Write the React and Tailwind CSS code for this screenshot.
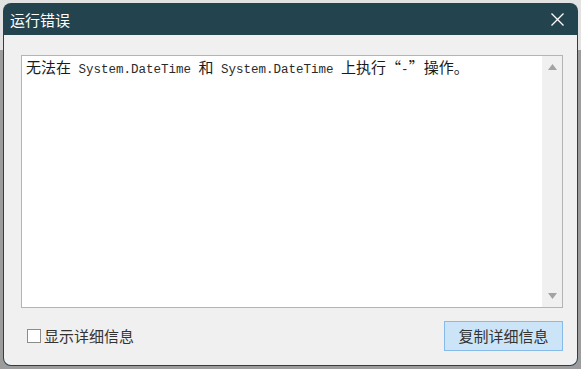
import React from "react";

const cjk = { fontFamily: '"Noto Sans CJK SC", "Microsoft YaHei", sans-serif' };

function Latin({ children }) {
  return (
    <span className="text-[12.5px] text-[#2a2a2a]" style={{ fontFamily: '"Liberation Mono", monospace' }}>
      {children}
    </span>
  );
}

export default function App() {
  return (
    <div className="w-[581px] h-[369px] p-[3px] bg-[linear-gradient(to_bottom,#e2e2e2_0px,#e2e2e2_50px,#9c9c9c_50px)] overflow-hidden">
      <div className="w-full h-full flex flex-col rounded-[8px] overflow-hidden bg-[#23444f]">
        {/* title bar */}
        <div className="h-[32px] flex items-center justify-between pl-[7px] pr-[14px] shrink-0">
          <span className="text-white text-[15px] leading-none" style={cjk}>运行错误</span>
          <svg width="13" height="13" viewBox="0 0 13 13" className="mt-[1px]">
            <path d="M0.5 0.5 L12.5 12.5 M12.5 0.5 L0.5 12.5" stroke="#ffffff" strokeWidth="1.3" fill="none" />
          </svg>
        </div>
        {/* body */}
        <div className="flex-1 flex flex-col bg-[#f0f0f0] ml-[1px] mr-[1px] mb-[1px] rounded-b-[7px] pl-[17px] pr-[14px] pt-[20px] pb-[14px]">
          <div className="h-[253px] border border-[#b4b4b4] bg-white flex">
            <div className="flex-1 pl-[4px] pt-[1px] text-[#1a1a1a] leading-[18px] whitespace-nowrap" style={cjk}>
              <span className="text-[15px]">无法在</span>
              <Latin> System.DateTime </Latin>
              <span className="text-[15px]">和</span>
              <Latin> System.DateTime </Latin>
              <span className="text-[15px]">上执行</span>
              <span className="inline-block w-[15px] text-right text-[15px]">“</span>
              <Latin>-</Latin>
              <span className="inline-block w-[15px] text-left text-[15px]">”</span>
              <span className="text-[15px]">操作。</span>
            </div>
            <div className="w-[20px] bg-[#f0f0f0] flex flex-col items-center justify-between py-[8px]">
              <svg width="9" height="6" viewBox="0 0 9 6"><path d="M4.5 0 L9 6 L0 6 Z" fill="#a3a3a3" /></svg>
              <svg width="9" height="6" viewBox="0 0 9 6"><path d="M0 0 L9 0 L4.5 6 Z" fill="#a3a3a3" /></svg>
            </div>
          </div>
          <div className="mt-[13px] flex items-center justify-between">
            <label className="flex items-center pl-[6px]">
              <span className="w-[14px] h-[14px] border border-[#8c8c8c] bg-white inline-block" />
              <span className="ml-[3px] text-[15px] text-[#333]" style={cjk}>显示详细信息</span>
            </label>
            <button className="w-[119px] h-[30px] bg-[#cce4f7] border border-[#86bbe8] text-[15px] text-[#333] flex items-center justify-center" style={cjk}>
              复制详细信息
            </button>
          </div>
        </div>
      </div>
    </div>
  );
}
